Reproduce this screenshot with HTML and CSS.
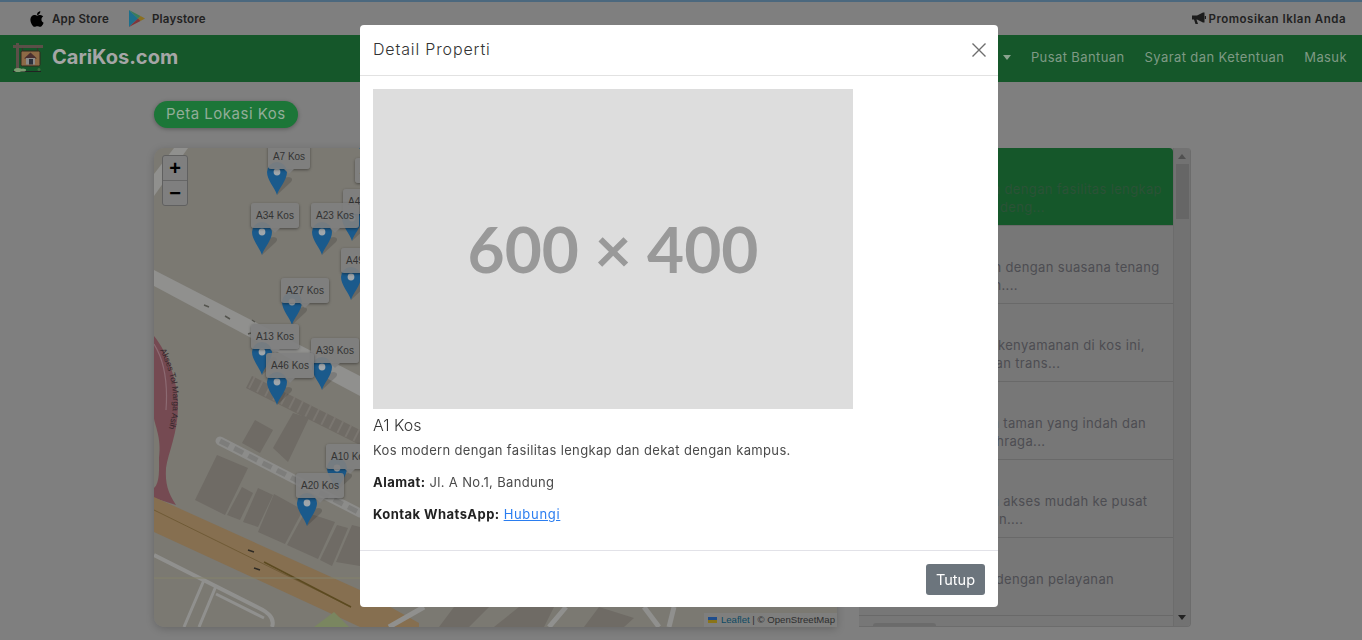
FILE: index.html
```html
<!DOCTYPE html>
<html lang="en">

<head>
    <meta charset="UTF-8">
    <meta name="viewport" content="width=device-width, initial-scale=1.0">
    <title>CariKos.com</title>
    <link rel="stylesheet" href="styles.css">
</head>

<body>
    <svg class="defs" width="0" height="0">
        <symbol id="pin" viewBox="0 0 34 33">
            <path d="M10 33 L24 20 Q27 16 22 15 L15 16 Z" fill="rgba(0,0,0,0.14)" />
            <path d="M10 33 C8 26 0 18 0 10 A10 10 0 0 1 20 10 C20 18 12 26 10 33 Z" fill="#1a5a8c" />
            <circle cx="10" cy="10" r="3.4" fill="#9fa6ab" />
        </symbol>
    </svg>

    <div class="topbar">
        <div class="topbar-left">
            <a class="store-link">
                <svg class="icon-apple" viewBox="0 0 384 512"><path d="M318.7 268.7c-.2-36.7 16.4-64.4 50-84.8-18.8-26.9-47.2-41.7-84.7-44.6-35.5-2.8-74.3 20.7-88.5 20.7-15 0-49.4-19.7-76.4-19.7C63.3 141.2 4 184.8 4 273.5q0 39.3 14.4 81.2c12.8 36.7 59 126.7 107.2 125.2 25.2-.6 43-17.9 75.8-17.9 31.8 0 48.3 17.9 76.4 17.9 48.6-.7 90.4-82.5 102.6-119.3-65.2-30.7-61.7-90-61.7-91.9zm-56.6-164.2c27.3-32.4 24.8-61.9 24-72.5-24.1 1.4-52 16.4-67.9 34.9-17.5 19.8-27.8 44.3-25.6 71.9 26.1 2 49.9-11.4 69.5-34.3z" /></svg>
                App Store
            </a>
            <a class="store-link">
                <svg class="icon-play" viewBox="0 0 16 17">
                    <polygon points="0,0 9,8.5 0,17" fill="#1d6f8c" />
                    <polygon points="0,0 11.5,6 9,8.5" fill="#3a7d5a" />
                    <polygon points="11.5,6 16,8.5 11.5,11 9,8.5" fill="#8a6f20" />
                    <polygon points="0,17 9,8.5 11.5,11" fill="#80353a" />
                </svg>
                Playstore
            </a>
        </div>
        <a class="promo-link">
            <svg class="icon-horn" viewBox="0 0 14 13">
                <path d="M0 3.5 H5 L11 0.5 H12.5 V10.5 H11 L5 7.5 H4.5 L6 12 H3.5 L2 7.5 H0 Z" />
                <rect x="12.8" y="4" width="1.2" height="3" />
            </svg>
            Promosikan Iklan Anda
        </a>
    </div>

    <nav class="navbar">
        <a class="brand">
            <svg class="logo" viewBox="0 0 32 32">
                <rect x="3" y="0" width="3" height="29" fill="#5c4f48" />
                <rect x="0" y="2" width="30" height="3" fill="#5c4f48" />
                <rect x="9" y="5" width="1" height="3" fill="#3a302c" />
                <rect x="24" y="5" width="1" height="3" fill="#3a302c" />
                <rect x="8" y="8" width="19" height="15" rx="1.5" fill="#8d6a46" stroke="#33291f" />
                <polygon points="17.5,9.5 11,15.5 24,15.5" fill="#4a2f2f" />
                <rect x="13" y="15" width="9" height="6.5" fill="#8a8a8a" />
                <rect x="16" y="16" width="4" height="5.5" fill="#2b2f3a" />
                <rect x="0" y="28" width="28" height="1" fill="#222" />
                <ellipse cx="5" cy="27" rx="4" ry="2" fill="#7d9c72" />
                <ellipse cx="10" cy="27" rx="3" ry="1.5" fill="#7d9c72" />
                <circle cx="26" cy="26.5" r="1.5" fill="#3f6e3f" />
            </svg>
            CariKos.com
        </a>
        <div class="nav-links">
            <a class="nav-caret"></a>
            <a>Pusat Bantuan</a>
            <a>Syarat dan Ketentuan</a>
            <a>Masuk</a>
        </div>
    </nav>

    <main class="content">
        <h2 class="pill">Peta Lokasi Kos</h2>
        <div class="map-row">
            <div class="map">
                <svg class="map-tiles" viewBox="0 0 683 479">
                    <rect width="683" height="479" fill="#7b7972" />
                    <!-- service roads top left -->
                    <polygon points="20,0 34,0 0,48 0,26" fill="#90908e" />
                    <polygon points="0,122 206,228 206,248 0,138" fill="#90908e" />
                    <path d="M50 157 l5 2 M71 168 l5 3 M98 172 l3 2 M94 186 l3 -1" stroke="#55554f" stroke-width="1.5" />
                    <!-- motorway -->
                    <path d="M0 188 C14 205 24 235 24 258 C24 285 14 305 12 320 C11 335 14 345 22 357 L0 350 L0 340 C6 335 5 320 5 310 C8 290 0 275 0 270 Z" fill="#754a52" />
                    <path d="M0 196 C10 212 14 235 12 262" fill="none" stroke="#8c6a72" stroke-width="1.2" />
                    <text class="road-name" font-size="8.5">
                        <textPath href="#toll-road">Akses Tol Marga Asih</textPath>
                    </text>
                    <path id="toll-road" d="M6 202 C14 218 20 238 19 258 C18 270 15 280 12 292" fill="none" />
                    <!-- row of small buildings -->
                    <polygon points="98,228 206,282 206,297 92,240" fill="#6f6b65" />
                    <line x1="97" y1="234" x2="206" y2="289" stroke="#7a7670" stroke-width="13" stroke-dasharray="2 7" />
                    <!-- buildings -->
                    <polygon points="41,352 63,307 94,320 71,367" fill="#6f6b65" />
                    <polygon points="88,295 101,272 119,282 106,305" fill="#6f6b65" />
                    <polygon points="119,300 139,265 155,270 134,314" fill="#6f6b65" />
                    <polygon points="73,367 88,339 99,345 86,372" fill="#6f6b65" />
                    <polygon points="89,374 104,340 119,347 104,379" fill="#6f6b65" />
                    <polygon points="104,384 120,346 149,362 131,396" fill="#6f6b65" />
                    <polygon points="133,397 151,364 181,374 164,411" fill="#6f6b65" />
                    <polygon points="166,412 183,377 194,380 178,418" fill="#6f6b65" />
                    <polygon points="182,414 198,377 206,379 206,418" fill="#6f6b65" />
                    <line x1="66" y1="293" x2="206" y2="365" stroke="#8c8c8a" stroke-width="9" stroke-linecap="round" />
                    <line x1="66" y1="293" x2="206" y2="365" stroke="#7d7d7b" stroke-width="5" stroke-dasharray="10 6" />
                    <!-- trunk road -->
                    <polygon points="0,349 206,442 265,475 265,479 206,479 0,384" fill="#866f50" />
                    <line x1="0" y1="362" x2="197" y2="459" stroke="#6a5530" stroke-width="0.8" />
                    <line x1="110" y1="414" x2="197" y2="459" stroke="#5c4a20" stroke-width="1.5" />
                    <path d="M94 402 l6 2 M100 420 l6 2" stroke="#2e2a24" stroke-width="1.5" />
                    <path d="M160 479 L180 464 L195 479 Z" fill="#7a8660" />
                    <!-- streets bottom left -->
                    <path d="M0 407 L105 460 Q122 468 118 479" fill="none" stroke="#90908e" stroke-width="4" />
                    <path d="M50 432 L30 479 M62 438 L45 479 M62 446 L110 470" fill="none" stroke="#90908e" stroke-width="3" />
                    <line x1="0" y1="430" x2="206" y2="430" stroke="#85836a" stroke-width="1" />
                    <!-- strip under the modal -->
                    <polygon points="340,479 365,459 400,459 390,479" fill="#6f6b65" />
                    <polygon points="285,479 300,459 335,459 315,479" fill="#6f6b65" />
                    <polygon points="430,479 445,459 480,470 470,479" fill="#6f6b65" />
                    <path d="M235 479 L270 459 M395 479 L412 459 M490 459 L505 479 M520 459 L515 479" fill="none" stroke="#90908e" stroke-width="5" />
                </svg>

                <svg class="pin"><use href="#pin" /></svg>
                <svg class="pin pin-a7"><use href="#pin" /></svg>
                <svg class="pin pin-a34"><use href="#pin" /></svg>
                <svg class="pin pin-a23"><use href="#pin" /></svg>
                <svg class="pin pin-a44"><use href="#pin" /></svg>
                <svg class="pin pin-a49"><use href="#pin" /></svg>
                <svg class="pin pin-a27"><use href="#pin" /></svg>
                <svg class="pin pin-a13"><use href="#pin" /></svg>
                <svg class="pin pin-a39"><use href="#pin" /></svg>
                <svg class="pin pin-a46"><use href="#pin" /></svg>
                <svg class="pin pin-a10"><use href="#pin" /></svg>
                <svg class="pin pin-a20"><use href="#pin" /></svg>

                <div class="map-label label-a41">A41 Kos</div>
                <div class="map-label label-a7">A7 Kos</div>
                <div class="map-label label-a44">A44 Kos</div>
                <div class="map-label label-a34">A34 Kos</div>
                <div class="map-label label-a23">A23 Kos</div>
                <div class="map-label label-a49">A49 Kos</div>
                <div class="map-label label-a27">A27 Kos</div>
                <div class="map-label label-a13">A13 Kos</div>
                <div class="map-label label-a39">A39 Kos</div>
                <div class="map-label label-a46">A46 Kos</div>
                <div class="map-label label-a10">A10 Kos</div>
                <div class="map-label label-a20">A20 Kos</div>

                <div class="zoom-control">
                    <a>+</a>
                    <a>−</a>
                </div>
                <div class="attribution">
                    <span class="flag"></span><a>Leaflet</a> | © OpenStreetMap
                </div>
            </div>

            <div class="panel">
                <div class="kos-list">
                    <div class="kos-item active">
                        <h5>A1 Kos</h5>
                        <p>Kos modern dengan fasilitas lengkap<br>serta dekat deng...</p>
                    </div>
                    <div class="kos-item">
                        <h5>A2 Kos</h5>
                        <p>Kos nyaman dengan suasana tenang<br>dan nyaman....</p>
                    </div>
                    <div class="kos-item">
                        <h5>A3 Kos</h5>
                        <p>Merasakan kenyamanan di kos ini,<br>dekat dengan trans...</p>
                    </div>
                    <div class="kos-item">
                        <h5>A13 Kos</h5>
                        <p>Kos dengan taman yang indah dan<br>fasilitas olahraga...</p>
                    </div>
                    <div class="kos-item">
                        <h5>A5 Kos</h5>
                        <p>Kos dengan akses mudah ke pusat<br>perbelanjaan....</p>
                    </div>
                    <div class="kos-item">
                        <h5>A20 Kos</h5>
                        <p>Kos murah dengan pelayanan<br>ramah</p>
                    </div>
                    <div class="kos-more"><span class="more-btn"></span></div>
                </div>
                <div class="scrollbar">
                    <span class="arrow-up"></span>
                    <span class="thumb"></span>
                    <span class="arrow-down"></span>
                </div>
            </div>
        </div>
    </main>

    <!-- Detail modal -->
    <div class="modal">
        <div class="modal-header">
            <h4>Detail Properti</h4>
            <svg class="modal-close" viewBox="0 0 14 14">
                <path d="M0.5 0.5 L13.5 13.5 M13.5 0.5 L0.5 13.5" />
            </svg>
        </div>
        <div class="modal-body">
            <div class="placeholder">600 × 400</div>
            <h5>A1 Kos</h5>
            <p>Kos modern dengan fasilitas lengkap dan dekat dengan kampus.</p>
            <p><strong>Alamat:</strong> Jl. A No.1, Bandung</p>
            <p><strong>Kontak WhatsApp:</strong> <a href="#">Hubungi</a></p>
        </div>
        <div class="modal-footer">
            <button type="button">Tutup</button>
        </div>
    </div>
</body>

</html>
```

FILE: styles.css
```css
/* General Styles */
body {
    margin: 0;
    height: 640px;
    overflow: hidden;
    font-family: "Inter", "Open Sans", sans-serif;
    background-color: #7f7f7f;
    /* Page is dimmed behind the modal, colours are the dimmed ones */
    color: #222222;
}

.defs {
    position: absolute;
}

/* Top bar */
.topbar {
    height: 33px;
    border-top: 2px solid #4b687e;
    display: flex;
    justify-content: space-between;
    align-items: center;
    padding: 0 16px 0 29px;
    font-size: 11.5px;
    font-weight: 600;
    letter-spacing: 0.2px;
}

.topbar-left {
    display: flex;
    gap: 20px;
}

.store-link,
.promo-link {
    display: flex;
    align-items: center;
    gap: 7px;
}

.promo-link {
    gap: 3px;
    letter-spacing: 0.5px;
}

.icon-apple {
    width: 16px;
    height: 18px;
    fill: #000000;
}

.icon-play {
    width: 16px;
    height: 17px;
}

.icon-horn {
    width: 14px;
    height: 13px;
    fill: #1c1c1c;
}

/* Navbar */
.navbar {
    height: 44px;
    padding: 0 15px 3px 13px;
    background-color: #15572a;
    display: flex;
    justify-content: space-between;
    align-items: center;
}

.brand {
    display: flex;
    align-items: center;
    gap: 7px;
    font-size: 20px;
    font-weight: 700;
    color: #a6a6a6;
}

.logo {
    width: 32px;
    height: 32px;
    margin-top: 3px;
}

.nav-links {
    display: flex;
    align-items: center;
    gap: 20px;
    font-size: 13px;
    letter-spacing: 0.4px;
    color: #7f9a85;
}

.nav-caret {
    width: 0;
    height: 0;
    border-left: 4px solid transparent;
    border-right: 4px solid transparent;
    border-top: 5px solid #8aa38f;
}

/* Main Content */
.content {
    padding: 19px 0 0 154px;
}

.pill {
    display: inline-block;
    margin: 0;
    padding: 0 12px;
    height: 27px;
    line-height: 26px;
    font-size: 15px;
    font-weight: 400;
    letter-spacing: 0.5px;
    color: #92ad98;
    background-color: #1c7638;
    border-radius: 14px;
    box-shadow: 0 1px 4px rgba(0, 0, 0, 0.3);
}

.map-row {
    display: flex;
    gap: 22px;
    margin-top: 20px;
    width: 1037px;
    height: 479px;
}

/* Map */
.map {
    position: relative;
    width: 683px;
    height: 479px;
    overflow: hidden;
    border-radius: 10px 0 0 10px;
    box-shadow: 0 2px 8px rgba(0, 0, 0, 0.2);
    font-family: "Liberation Sans", sans-serif;
}

.map-tiles {
    display: block;
}

.road-name {
    fill: #33262a;
}

.pin {
    position: absolute;
    width: 34px;
    height: 33px;
    left: 202px;
    top: -20px;
}

.pin-a7 { left: 113px; top: 14px; }
.pin-a34 { left: 98px; top: 74px; }
.pin-a23 { left: 158px; top: 74px; }
.pin-a44 { left: 188px; top: 60px; }
.pin-a49 { left: 187px; top: 119px; }
.pin-a27 { left: 128px; top: 144px; }
.pin-a13 { left: 98px; top: 194px; }
.pin-a39 { left: 158px; top: 209px; }
.pin-a46 { left: 113px; top: 224px; }
.pin-a10 { left: 173px; top: 310px; }
.pin-a20 { left: 143px; top: 345px; }

.map-label {
    position: absolute;
    width: 48px;
    height: 25px;
    line-height: 25px;
    text-align: center;
    font-size: 10px;
    color: #333333;
    background-color: rgba(128, 128, 128, 0.9);
    border-radius: 3px;
    box-shadow: 0 1px 3px rgba(0, 0, 0, 0.4);
}

.map-label::before {
    content: "";
    position: absolute;
    left: 50%;
    bottom: -5px;
    margin-left: -5px;
    border-left: 5px solid transparent;
    border-right: 5px solid transparent;
    border-top: 5px solid rgba(128, 128, 128, 0.9);
}

.label-a41 { left: 201px; top: 10px; }
.label-a7 { left: 114px; top: -4px; width: 42px; }
.label-a44 { left: 189px; top: 41px; }
.label-a34 { left: 97px; top: 55px; }
.label-a23 { left: 157px; top: 55px; }
.label-a49 { left: 187px; top: 100px; }
.label-a27 { left: 127px; top: 130px; }
.label-a13 { left: 97px; top: 176px; }
.label-a39 { left: 157px; top: 190px; }
.label-a46 { left: 112px; top: 205px; }
.label-a10 { left: 172px; top: 296px; }
.label-a20 { left: 142px; top: 325px; }

.zoom-control {
    position: absolute;
    left: 8px;
    top: 7px;
    width: 24px;
    border: 1px solid #606060;
    border-radius: 3px;
    background-color: #7f7f7f;
}

.zoom-control a {
    display: block;
    height: 24px;
    line-height: 24px;
    text-align: center;
    font-size: 20px;
    font-weight: 700;
    color: #000000;
}

.zoom-control a:first-child {
    border-bottom: 1px solid #666666;
}

.attribution {
    position: absolute;
    right: 0;
    bottom: 0;
    height: 14px;
    line-height: 14px;
    padding: 0 2px 0 4px;
    font-size: 9.6px;
    color: #2e2e2e;
    background-color: rgba(128, 128, 128, 0.85);
}

.attribution a {
    color: #0d4a63;
}

.flag {
    display: inline-block;
    width: 9px;
    height: 6px;
    margin-right: 4px;
    background: linear-gradient(#1f4d8c 50%, #8a7418 50%);
}

/* Kos list */
.panel {
    flex: 1;
    display: flex;
    height: 479px;
    overflow: hidden;
    border-right: 1px solid #6c6c6c;
    border-bottom: 1px solid #6c6c6c;
    border-radius: 0 4px 4px 0;
    box-sizing: border-box;
}

.kos-list {
    width: 314px;
    background-color: #777777;
}

.kos-item {
    height: 78px;
    box-sizing: border-box;
    padding: 9px 8px 0 64px;
    border-bottom: 1px solid #696969;
}

.kos-item.active {
    background-color: #15572a;
    border-radius: 0 4px 0 0;
}

.kos-item.active p {
    color: #2b5237;
}

.kos-item h5 {
    margin: 0;
    font-size: 18.5px;
    line-height: 23px;
    font-weight: 400;
    color: #1f4a70;
}

.kos-item p {
    margin: 0;
    font-size: 13px;
    letter-spacing: 0.35px;
    line-height: 18px;
    white-space: nowrap;
    color: #4d4d52;
}

.kos-more {
    padding: 7px 0 0 14px;
}

.more-btn {
    display: block;
    width: 63px;
    height: 30px;
    border-radius: 3px;
    background-color: #6b6b6b;
}

.scrollbar {
    flex: 1;
    display: flex;
    flex-direction: column;
    align-items: center;
    background-color: #727272;
    border-left: 1px solid #6c6c6c;
}

.arrow-up {
    margin-top: 6px;
    border-left: 4px solid transparent;
    border-right: 4px solid transparent;
    border-bottom: 5px solid #505050;
}

.thumb {
    width: 13px;
    height: 55px;
    margin-top: 5px;
    background-color: #666666;
}

.arrow-down {
    margin-top: auto;
    margin-bottom: 6px;
    border-left: 4px solid transparent;
    border-right: 4px solid transparent;
    border-top: 5px solid #222222;
}

/* Modal */
.modal {
    position: fixed;
    left: 360px;
    top: 25px;
    width: 638px;
    height: 582px;
    display: flex;
    flex-direction: column;
    background-color: #FFFFFF;
    border-radius: 4px;
    color: #4a4a4a;
}

.modal-header {
    height: 50px;
    flex-shrink: 0;
    display: flex;
    justify-content: space-between;
    align-items: center;
    padding: 0 12px 0 13px;
    border-bottom: 1px solid #e2e2e2;
}

.modal-header h4 {
    margin: 0 0 2px;
    font-size: 16px;
    font-weight: 300;
    color: #333333;
    letter-spacing: 0.85px;
}

.modal-close {
    width: 14px;
    height: 14px;
    fill: none;
    stroke: #6e6e6e;
    stroke-width: 1.4;
}

.modal-body {
    flex: 1;
    padding: 13px 13px 0;
    font-size: 13px;
    line-height: 18px;
}

.placeholder {
    width: 480px;
    height: 320px;
    display: flex;
    justify-content: center;
    align-items: center;
    background-color: #dddddd;
    color: #999999;
    font-family: "Lato", sans-serif;
    font-size: 64px;
    font-weight: 700;
}

.modal-body h5 {
    margin: 6px 0 6px;
    font-size: 16px;
    line-height: 20px;
    font-weight: 300;
    color: #333333;
}

.modal-body p {
    margin: 0 0 14px;
    letter-spacing: 0.35px;
}

.modal-body strong {
    color: #222222;
    font-weight: 700;
    letter-spacing: 0.45px;
}

.modal-body a {
    color: #2a7df0;
    letter-spacing: 0.7px;
}

.modal-footer {
    height: 56px;
    flex-shrink: 0;
    display: flex;
    justify-content: flex-end;
    align-items: center;
    padding: 0 13px;
    border-top: 1px solid #e2e2e8;
}

.modal-footer button {
    width: 59px;
    height: 31px;
    border: none;
    border-radius: 3px;
    background-color: #6c757d;
    color: #FFFFFF;
    font-family: inherit;
    font-size: 14.5px;
    font-weight: 400;
}
```
